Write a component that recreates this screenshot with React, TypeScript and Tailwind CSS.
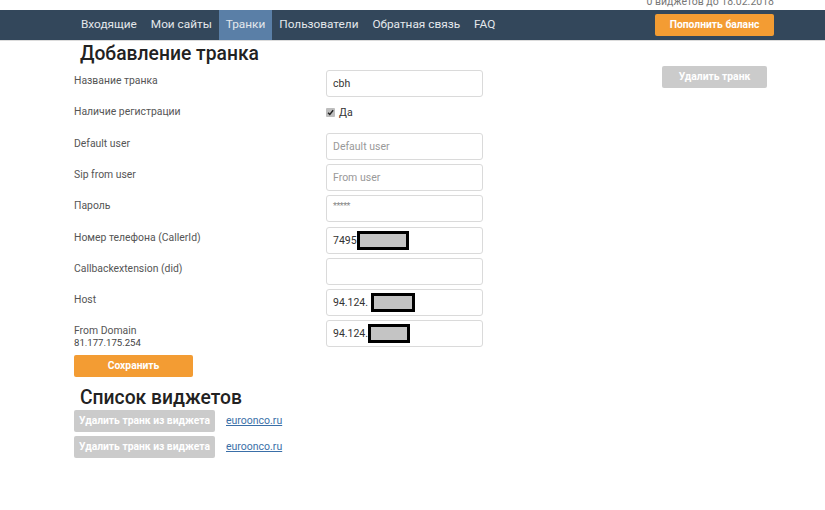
import React from "react";

const Redact = ({ w }: { w: number }) => (
  <span
    className="inline-block h-[19px] border-[3px] border-black bg-[#c4c4c4] align-middle"
    style={{ width: w }}
  />
);

type Row = {
  label: string;
  sub?: string;
  kind: "input" | "check";
  value?: React.ReactNode;
  placeholder?: string;
  pw?: boolean;
  tall?: boolean;
};

const rows: Row[] = [
  { label: "Название транка", kind: "input", value: "cbh" },
  { label: "Наличие регистрации", kind: "check" },
  { label: "Default user", kind: "input", placeholder: "Default user" },
  { label: "Sip from user", kind: "input", placeholder: "From user" },
  { label: "Пароль", kind: "input", pw: true, tall: true },
  {
    label: "Номер телефона (CallerId)",
    kind: "input",
    value: (
      <span className="flex items-center">
        7495
        <Redact w={52} />
      </span>
    ),
  },
  { label: "Callbackextension (did)", kind: "input" },
  {
    label: "Host",
    kind: "input",
    value: (
      <span className="flex items-center">
        94.124.
        <span className="ml-[3px]" />
        <Redact w={44} />
      </span>
    ),
  },
  {
    label: "From Domain",
    sub: "81.177.175.254",
    kind: "input",
    value: (
      <span className="flex items-center">
        94.124.
        <Redact w={42} />
      </span>
    ),
  },
];

export default function App() {
  return (
    <div
      className="min-h-[510px] w-[825px] bg-white text-[#333]"
      style={{ fontFamily: "Roboto, 'Liberation Sans', sans-serif" }}
    >
      <div className="h-[10px] overflow-hidden pr-[51px] text-right">
        <div className="mt-[-5px] text-[10.5px] leading-[13px] text-[#777]">
          0 виджетов до 18.02.2018
        </div>
      </div>
      <nav className="flex h-[31px] items-stretch border-b border-[#dcdcdc] bg-[#33475b] pl-[74px] pr-[51px]">
        {["Входящие", "Мои сайты", "Транки", "Пользователи", "Обратная связь", "FAQ"].map(
          (t) => (
            <div
              key={t}
              className={
                "flex items-center px-[7px] text-[11.8px] text-[#e4e8ec] " +
                (t === "Транки" ? "bg-[#5a7fa7]" : "")
              }
            >
              {t}
            </div>
          )
        )}
        <div className="ml-auto flex items-center">
          <button className="h-[22px] w-[119px] rounded-[2px] bg-[#f39c33] text-[10.3px] font-bold text-white">
            Пополнить баланс
          </button>
        </div>
      </nav>

      <div className="flex pl-[74px] pr-[58px]">
        <div className="w-[409px]">
          <h1 className="ml-[6px] mt-[1px] text-[19.3px] font-medium leading-[24px] text-[#222]">
            Добавление транка
          </h1>
          <div className="mt-[4px] flex flex-col">
            {rows.map((r, i) => (
              <div
                key={i}
                className={
                  "flex " +
                  (r.kind === "check" || r.tall ? "h-[32px]" : "h-[31px]")
                }
              >
                <div className="w-[252px] pt-[4px] text-[10.4px] leading-[14px] text-[#555]">
                  <div>{r.label}</div>
                  {r.sub && (
                    <div className="mt-[-1px] text-[9.6px] leading-[12px] text-[#444]">{r.sub}</div>
                  )}
                </div>
                {r.kind === "check" ? (
                  <div className="flex h-[22px] items-center gap-[4px] pt-[1px] text-[10.5px] text-[#333]">
                    <span className="flex h-[9px] w-[9px] items-center justify-center rounded-[1px] bg-[#bdbdbd]">
                      <svg width="7" height="7" viewBox="0 0 10 10">
                        <path
                          d="M1.5 5.2 L4 7.8 L8.8 1.8"
                          stroke="#222"
                          strokeWidth="2"
                          fill="none"
                        />
                      </svg>
                    </span>
                    Да
                  </div>
                ) : (
                  <div className="flex h-[27px] w-[157px] items-center rounded-[3px] border border-[#dadada] px-[6px] text-[10.5px] text-[#333]">
                    {r.value}
                    {r.placeholder && <span className="text-[#999]">{r.placeholder}</span>}
                    {r.pw && (
                      <span className="mt-[-4px] text-[9px] tracking-[-0.5px] text-[#888]">
                        *****
                      </span>
                    )}
                  </div>
                )}
              </div>
            ))}
          </div>
          <button className="mt-[4px] h-[22px] w-[119px] rounded-[2px] bg-[#f39c33] text-[10.3px] font-bold text-white">
            Сохранить
          </button>
          <h2 className="ml-[6px] mt-[9px] text-[19.3px] font-medium leading-[24px] text-[#222]">
            Список виджетов
          </h2>
          <div className="flex flex-col gap-[4px]">
            {[0, 1].map((i) => (
              <div key={i} className="flex items-center gap-[11px]">
                <button className="h-[22px] w-[141px] rounded-[2px] bg-[#cbcbcb] text-[10.3px] font-bold text-white">
                  Удалить транк из виджета
                </button>
                <a className="text-[10.5px] text-[#3a6fa8] underline">euroonco.ru</a>
              </div>
            ))}
          </div>
        </div>
        <div className="ml-auto pt-[22px]">
          <button className="h-[22px] w-[105px] rounded-[2px] bg-[#cbcbcb] text-[10.3px] font-bold text-white">
            Удалить транк
          </button>
        </div>
      </div>
    </div>
  );
}
